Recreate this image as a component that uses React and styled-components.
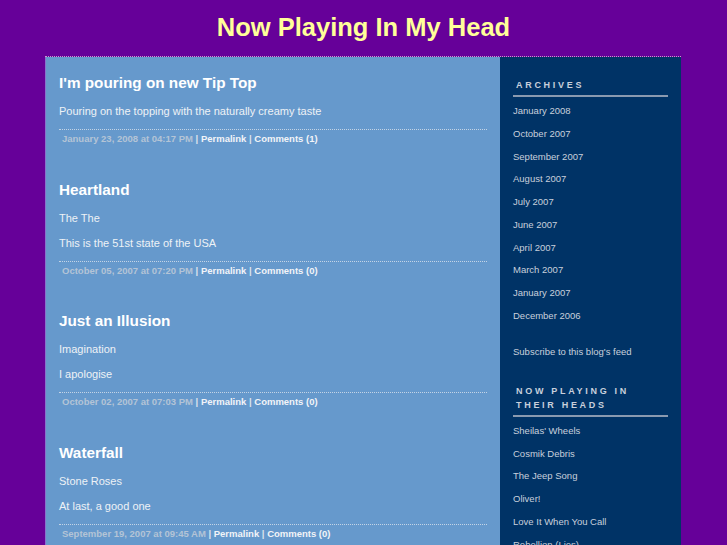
import React from "react"
import styled, { createGlobalStyle } from "styled-components"

const Global = createGlobalStyle`
  html, body {
    margin: 0;
    padding: 0;
    background-color: #660099;
    font-family: "Liberation Sans", Arial, sans-serif;
  }
`

const Header = styled.header`
  padding: 12px 0 14px;
  text-align: center;
`
const SiteTitle = styled.h1`
  margin: 0;
  font-size: 25.5px;
  line-height: 30px;
  font-weight: 700;
  color: #ffff99;
`
const Wrapper = styled.div`
  width: 636px;
  margin: 0 0 0 45px;
  display: grid;
  grid-template-columns: 455px 181px;
  border-top: 1px dotted #cc99cc;
  min-height: 600px;
`
const Content = styled.main`
  background-color: #6699cc;
  border-left: 1px solid #8a70cc;
  padding: 16px 13px 0 13px;
`
const Post = styled.article`
  margin-bottom: 34.5px;
`
const PostTitle = styled.h2`
  margin: 0 0 11px;
  font-size: 15.3px;
  line-height: 20px;
  font-weight: 700;
  color: #ffffff;
`
const Para = styled.p`
  margin: 0 0 11px;
  font-size: 11px;
  line-height: 14px;
  color: #eef2f6;
`
const Footer = styled.div`
  border-top: 1px dotted #c4d4e6;
  padding: 3px 0 0 3px;
  font-size: 9.5px;
  line-height: 12px;
  font-weight: 700;
  color: #dde4ec;
`
const Date = styled.span`
  color: #b4c4d6;
`
const Link = styled.a`
  color: #f2f4f8;
  text-decoration: none;
`
const Sidebar = styled.aside`
  background-color: #003366;
  padding: 21px 13px 0 13px;
`
const Heading = styled.h3`
  margin: ${p => (p.$first ? "0" : "20.7px")} 0 0;
  padding: 0 0 3px 3px;
  font-size: 9px;
  line-height: 14px;
  font-weight: 700;
  letter-spacing: 2.7px;
  color: #c8d0dc;
  border-bottom: 2px solid #8a9ab0;
  text-transform: uppercase;
`
const List = styled.ul`
  list-style: none;
  margin: 3px 0 0;
  padding: 0;
`
const Item = styled.li`
  font-size: 9.5px;
  line-height: 22.75px;
  color: #c8d0dc;
`
const Feed = styled.div`
  margin-top: 13px;
  font-size: 9.5px;
  line-height: 22.75px;
  color: #c8d0dc;
`

const posts = [
  {
    title: "I'm pouring on new Tip Top",
    body: ["Pouring on the topping with the naturally creamy taste"],
    date: "January 23, 2008 at 04:17 PM",
    comments: 1,
  },
  {
    title: "Heartland",
    body: ["The The", "This is the 51st state of the USA"],
    date: "October 05, 2007 at 07:20 PM",
    comments: 0,
  },
  {
    title: "Just an Illusion",
    body: ["Imagination", "I apologise"],
    date: "October 02, 2007 at 07:03 PM",
    comments: 0,
  },
  {
    title: "Waterfall",
    body: ["Stone Roses", "At last, a good one"],
    date: "September 19, 2007 at 09:45 AM",
    comments: 0,
  },
]

const archives = [
  "January 2008",
  "October 2007",
  "September 2007",
  "August 2007",
  "July 2007",
  "June 2007",
  "April 2007",
  "March 2007",
  "January 2007",
  "December 2006",
]

const playing = [
  "Sheilas' Wheels",
  "Cosmik Debris",
  "The Jeep Song",
  "Oliver!",
  "Love It When You Call",
  "Rebellion (Lies)",
]

const App = () => (
  <>
    <Global />
    <Header>
      <SiteTitle>Now Playing In My Head</SiteTitle>
    </Header>
    <Wrapper>
      <Content>
        {posts.map(post => (
          <Post key={post.title}>
            <PostTitle>{post.title}</PostTitle>
            {post.body.map(line => (
              <Para key={line}>{line}</Para>
            ))}
            <Footer>
              <Date>{post.date}</Date> | <Link href="#">Permalink</Link> |{" "}
              <Link href="#">Comments ({post.comments})</Link>
            </Footer>
          </Post>
        ))}
      </Content>
      <Sidebar>
        <Heading $first>Archives</Heading>
        <List>
          {archives.map(a => (
            <Item key={a}>{a}</Item>
          ))}
        </List>
        <Feed>Subscribe to this blog's feed</Feed>
        <Heading>Now Playing in their heads</Heading>
        <List>
          {playing.map(s => (
            <Item key={s}>{s}</Item>
          ))}
        </List>
      </Sidebar>
    </Wrapper>
  </>
)

export default App
